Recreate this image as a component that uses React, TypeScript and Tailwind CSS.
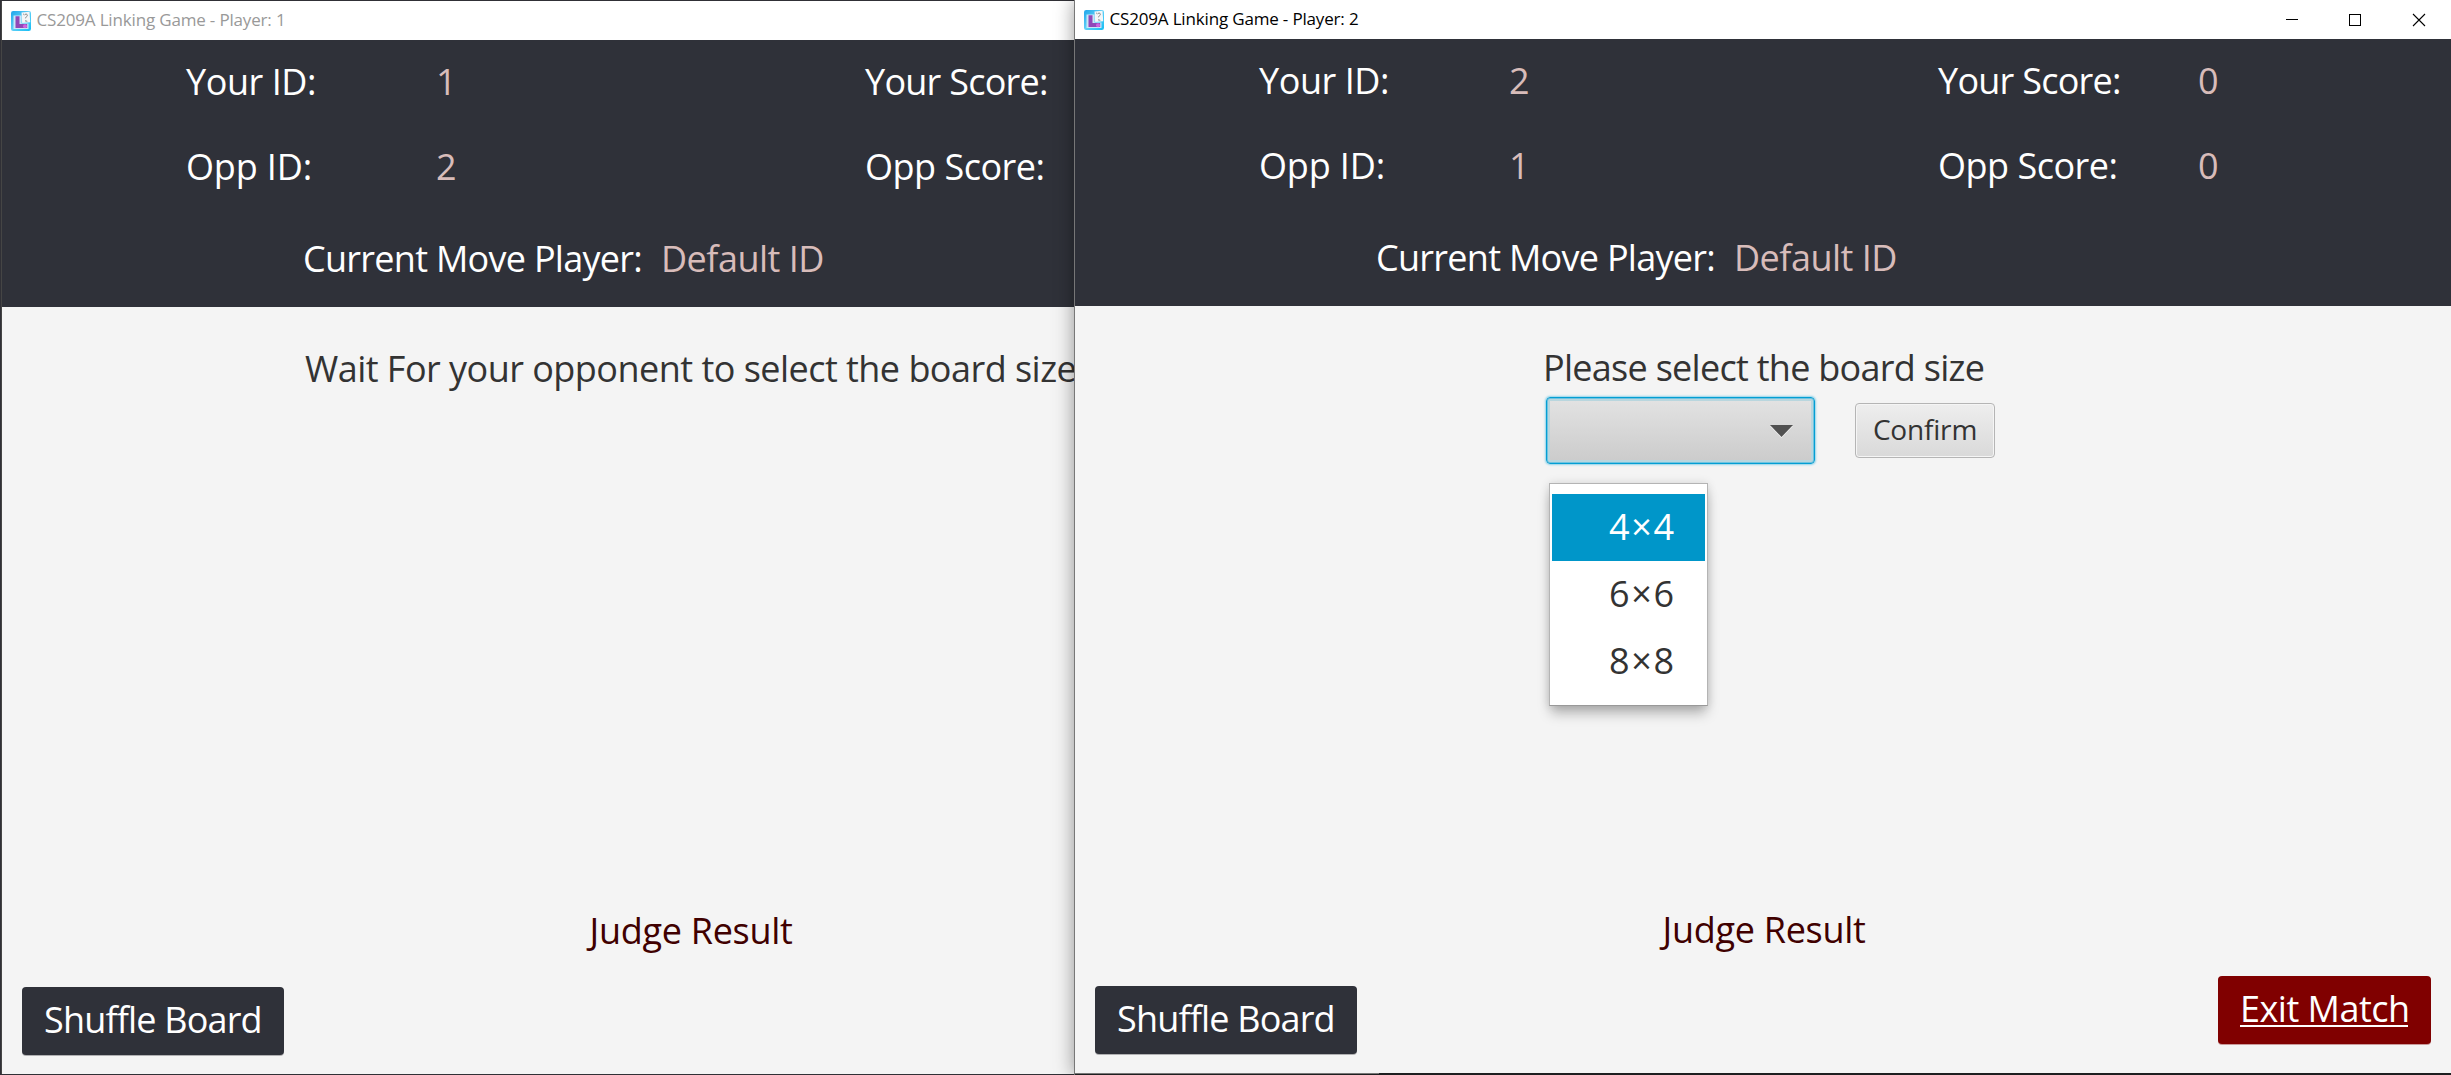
import React from 'react';

function AppIcon() {
  return (
    <svg width="20" height="20" viewBox="0 0 20 20" className="shrink-0">
      <defs>
        <linearGradient id="sky" x1="0" y1="0" x2="1" y2="1">
          <stop offset="0" stopColor="#1fa5ea" />
          <stop offset="0.5" stopColor="#5fd0f7" />
          <stop offset="1" stopColor="#12bdf5" />
        </linearGradient>
      </defs>
      <rect width="20" height="20" rx="2.2" fill="url(#sky)" />
      <path d="M2.5 4.5h8v8h7v5.5h-15z" fill="#c9e6f8" />
      <path d="M10.500 1.500l8-.7.700 10.500-8 .7z" fill="#f4f6f8" />
      <path d="M13.500 4.200c.8-1.700 3.200-1.300 2.800.5-.2 1-1.700 1.200-1.800 2.600M12.200 3l1 .6M14 9.800l2.300.5" stroke="#777" strokeWidth="0.9" fill="none" />
      <path d="M4.500 5.300h4v7.800h7.700v4H4.500z" fill="#9147b8" />
      <circle cx="14" cy="15.300" r="2" fill="#cf62e0" />
    </svg>
  );
}

function TitleBar({ player, active }: { player: number; active: boolean }) {
  return (
    <div className="flex h-[39px] items-center bg-white pl-[9px]">
      <AppIcon />
      <span
        className={`mb-[2px] ml-[5.5px] whitespace-pre text-[17px] leading-6 tracking-[-0.17px] ${active ? 'text-black' : 'text-[#999999]'}`}
      >
        {`CS209A Linking Game - Player: ${player}`}
      </span>
      {active && (
        <svg className="ml-auto mr-[25px]" width="141" height="14" viewBox="0 0 141 14" fill="none" stroke="#000" shapeRendering="crispEdges">
          <path d="M1 6.500h12" />
          <path d="M64.500 1.500h11v11h-11z" />
          <path d="M128 1l12 12M140 1l-12 12" strokeWidth="1.100" shapeRendering="auto" />
        </svg>
      )}
    </div>
  );
}

function Scoreboard({ you, opp }: { you: number; opp: number }) {
  return (
    <div className="h-[267px] bg-[#2f3139] pt-[18px] text-white">
      <div className="grid grid-cols-[250px_430px_259px_100px] auto-rows-[85px] pl-[184px]">
        <span className="tracking-[-0.45px]">Your ID:</span>
        <span className="text-[#d8bcba]">{you}</span>
        <span className="-ml-px tracking-[-0.75px]">Your Score:</span>
        <span className="text-[#d8bcba]">0</span>
        <span className="tracking-[-0.15px]">Opp ID:</span>
        <span className="text-[#d8bcba]">{opp}</span>
        <span className="-ml-px tracking-[-0.5px]">Opp Score:</span>
        <span className="text-[#d8bcba]">0</span>
      </div>
      <div className="mt-[7px] flex pl-[301px]">
        <span className="w-[358px] tracking-[-0.72px]">Current Move Player:</span>
        <span className="tracking-[-0.5px] text-[#d8bcba]">Default ID</span>
      </div>
    </div>
  );
}

const sizes = ['4×4', '6×6', '8×8'];

function SizePicker() {
  return (
    <div className="pl-[468px]">
      <div className="tracking-[-0.72px] text-[#333333]">Please select the board size</div>
      <div className="mt-[5px] flex items-center pl-[3px]">
        <div className="relative flex h-[67px] w-[269px] items-center justify-end rounded-[4px] border border-[#039ed3] bg-linear-to-b from-[#e3e3e3] to-[#cbcbcb] pr-[21px] shadow-[0_0_2px_1px_#8fd3ea,inset_0_0_0_1px_#6fc3e0,inset_0_0_0_3px_#b9d6de]">
          <svg width="23" height="14" viewBox="0 0 23 14">
            <path d="M0 2h23L11.500 14z" fill="#f4f4f4" />
            <path d="M0 1h23L11.500 13z" fill="#515151" />
          </svg>
          <ul className="absolute top-[85px] left-[2px] h-[223px] w-[159px] border border-[#b4b4b4] border-b-[#999999] bg-white px-[2px] pt-[10px] shadow-[0_9px_12px_-2px_rgba(0,0,0,0.28),0_0_9px_rgba(0,0,0,0.12)]">
            {sizes.map((s, i) => (
              <li
                key={s}
                className={`flex h-[67px] items-start pt-[9px] pl-[57px] tracking-[1.7px] ${i === 0 ? 'bg-[#0096c9] text-white' : 'text-[#333333]'}`}
              >
                {s}
              </li>
            ))}
          </ul>
        </div>
        <button className="ml-[40px] h-[55px] w-[140px] rounded-[4px] border border-[#b5b5b5] bg-linear-to-b from-[#eeeeee] to-[#d9d9d9] pb-[3px] text-[28px] leading-[38px] tracking-[-0.18px] text-[#333333] shadow-[inset_0_0_0_1px_#f5f5f5]">
          Confirm
        </button>
      </div>
    </div>
  );
}

function GameWindow({ player, opp, active }: { player: number; opp: number; active: boolean }) {
  return (
    <div className="flex h-[1073px] flex-col">
      <TitleBar player={player} active={active} />
      <Scoreboard you={player} opp={opp} />
      <div className="flex flex-1 flex-col bg-[#f4f4f4] pt-[38px]">
        <div className="h-[562px]">
          {active ? (
            <SizePicker />
          ) : (
            <div className="pl-[303px] tracking-[-0.53px] whitespace-nowrap text-[#333333]">
              Wait For your opponent to select the board size
            </div>
          )}
        </div>
        <div className="pl-[587.5px] tracking-[-0.28px] text-[#400000]">Judge Result</div>
        <div className="mt-[22px] flex items-start justify-between pr-[20px] pl-[20px]">
          <button className="mt-[10px] flex h-[68px] w-[262px] items-start rounded-[4px] bg-[#2f3139] pt-[9px] pl-[22px] tracking-[-0.82px] text-white shadow-[0_1px_0_#b0b0b2]">
            Shuffle Board
          </button>
          {active && (
            <button className="flex h-[68px] w-[213px] items-start rounded-[4px] bg-[#800000] pt-[9px] pl-[22px] text-white shadow-[0_1px_0_#c99a9a]">
              <span className="relative tracking-[-0.51px] after:absolute after:top-[40px] after:left-0 after:h-[2px] after:w-[168px] after:bg-white">
                Exit Match
              </span>
            </button>
          )}
        </div>
      </div>
    </div>
  );
}

export default function App() {
  return (
    <div className="relative h-[1075px] w-[2451px] overflow-hidden bg-[#303036] font-['Open_Sans','Noto_Sans',sans-serif] text-[36px] leading-[48px]">
      <div className="absolute top-px left-px w-[1378px] border-l border-[#454545]">
        <GameWindow player={1} opp={2} active={false} />
      </div>
      <div className="absolute top-0 left-[1074px] h-[1075px] w-[1377px] border-l border-[#777777] bg-[#1e1f20] shadow-[0_0_18px_rgba(0,0,0,0.4)]">
        <GameWindow player={2} opp={1} active />
        <div className="h-px w-[304px] bg-[#777777]" />
      </div>
    </div>
  );
}
